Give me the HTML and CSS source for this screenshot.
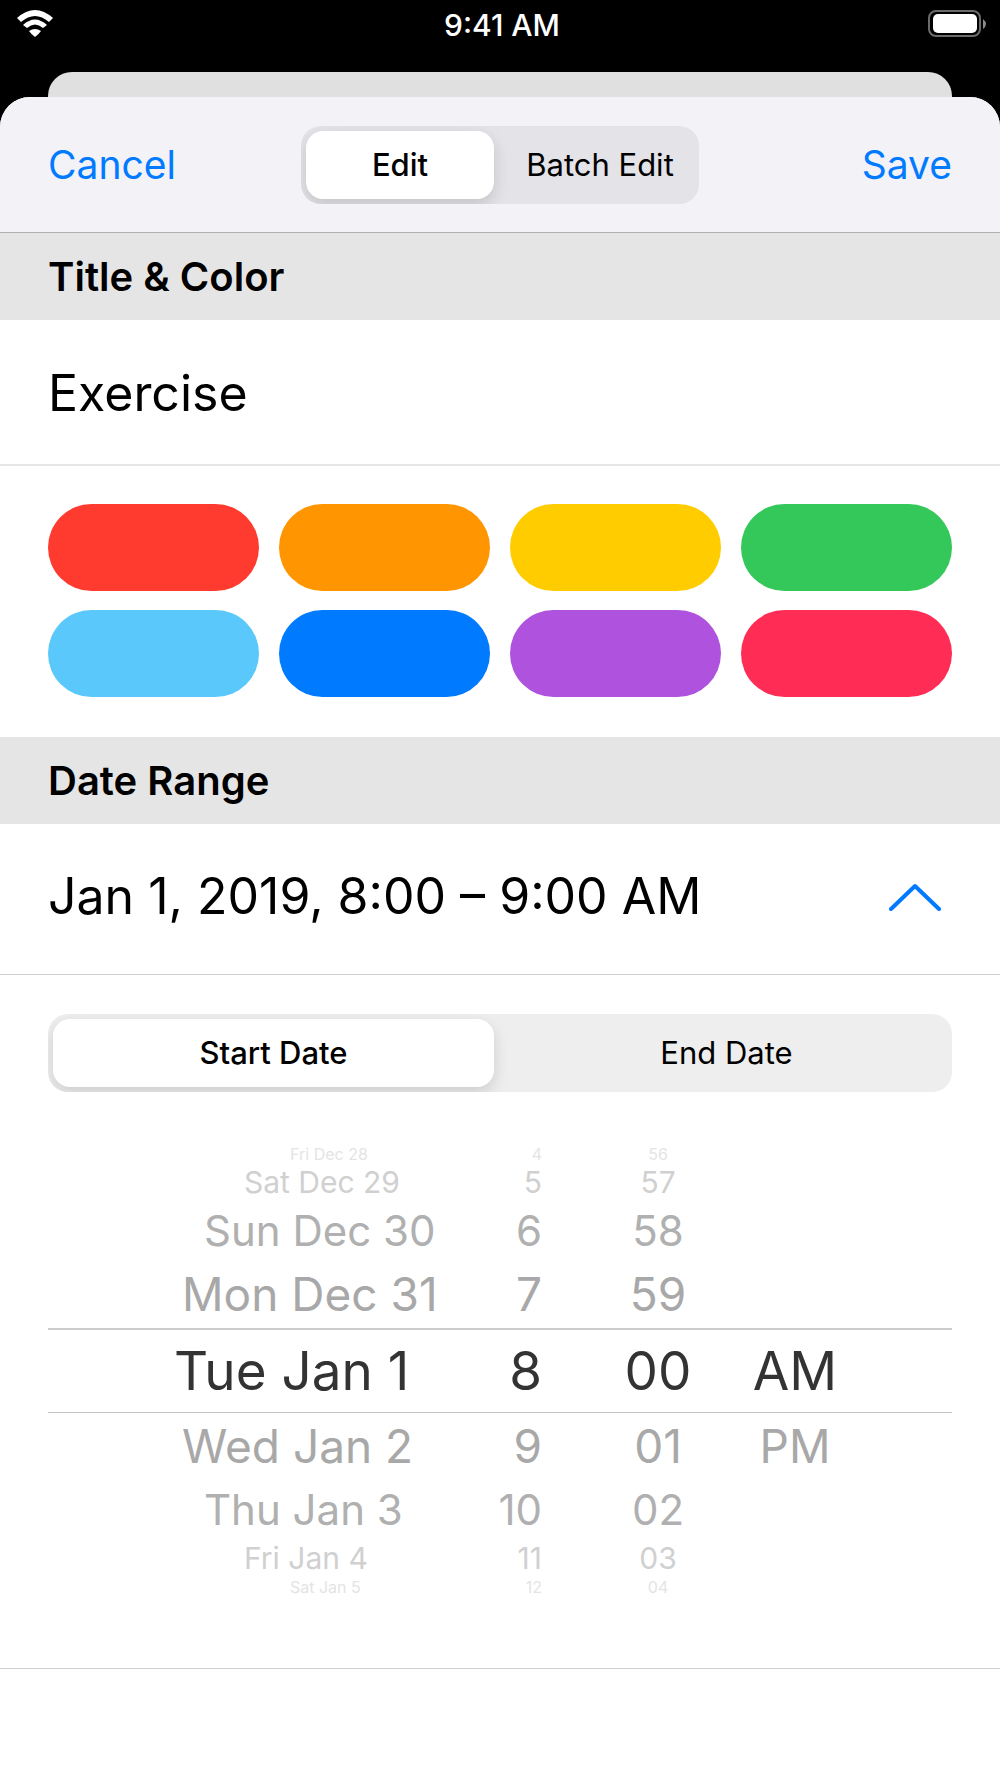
FILE: index.html
```html
<!DOCTYPE html>
<html lang="en">

<head>
    <meta charset="UTF-8">
    <meta name="viewport" content="width=device-width, initial-scale=1">
    <title>Edit</title>
    <link rel="stylesheet" href="styles.css">
</head>

<body>
    <header class="status">
        <svg class="wifi" viewBox="0 0 36 27" width="36" height="27" aria-hidden="true">
            <path d="M0 8Q18 -8 36 8L32 12Q18 0 4 12Z" />
            <path d="M6 15Q18 4 30 15L26 18Q18 11 10 18Z" />
            <path d="M12 21Q18 17 24 21Q22 24 18 27Q14 24 12 21Z" />
        </svg>
        <span class="time">9:41 AM</span>
        <svg class="battery" viewBox="0 0 59 27" width="59" height="27" aria-hidden="true">
            <rect x="1" y="1" width="51" height="25" rx="7" fill="none" stroke="#6b6b6b" stroke-width="2" />
            <rect x="5" y="4" width="44" height="19" rx="5" fill="#fff" />
            <path d="M55 9q6 5 0 10z" fill="#8a8a8a" />
        </svg>
    </header>

    <div class="back-card"></div>

    <form class="sheet">
        <nav class="nav">
            <button type="button" class="link">Cancel</button>
            <div class="segmented">
                <label class="segment"><input type="radio" name="mode" checked><span>Edit</span></label>
                <label class="segment"><input type="radio" name="mode"><span>Batch Edit</span></label>
            </div>
            <button type="button" class="link save">Save</button>
        </nav>

        <h2 class="heading">Title &amp; Color</h2>
        <div class="title-row">
            <input class="title" type="text" value="Exercise" aria-label="Title">
        </div>
        <div class="colors">
            <input type="radio" name="color" class="color red" aria-label="Red">
            <input type="radio" name="color" class="color orange" aria-label="Orange">
            <input type="radio" name="color" class="color yellow" aria-label="Yellow">
            <input type="radio" name="color" class="color green" aria-label="Green">
            <input type="radio" name="color" class="color teal" aria-label="Teal">
            <input type="radio" name="color" class="color blue" aria-label="Blue">
            <input type="radio" name="color" class="color purple" aria-label="Purple">
            <input type="radio" name="color" class="color pink" aria-label="Pink">
        </div>

        <h2 class="heading">Date Range</h2>
        <button type="button" class="range" aria-expanded="true">
            <span>Jan 1, 2019, 8:00 – 9:00 AM</span>
            <svg viewBox="0 0 52 30" width="52" height="30" aria-hidden="true">
                <path d="M2 28L26 5L50 28" fill="none" stroke="#007aff" stroke-width="4" stroke-linecap="round" stroke-linejoin="round" />
            </svg>
        </button>

        <div class="picker">
            <div class="segmented wide">
                <label class="segment"><input type="radio" name="date" checked><span>Start Date</span></label>
                <label class="segment"><input type="radio" name="date"><span>End Date</span></label>
            </div>

            <!-- rows get smaller and lighter away from the selected one -->
            <div class="wheel">
                <div class="row far4"><span>Fri Dec 28</span><span>4</span><span>56</span><span></span></div>
                <div class="row far3"><span>Sat Dec 29</span><span>5</span><span>57</span><span></span></div>
                <div class="row far2"><span>Sun Dec 30</span><span>6</span><span>58</span><span></span></div>
                <div class="row far1"><span>Mon Dec 31</span><span>7</span><span>59</span><span></span></div>
                <div class="row selected"><span>Tue Jan 1</span><span>8</span><span>00</span><span>AM</span></div>
                <div class="row far1"><span>Wed Jan 2</span><span>9</span><span>01</span><span>PM</span></div>
                <div class="row far2"><span>Thu Jan 3</span><span>10</span><span>02</span><span></span></div>
                <div class="row far3"><span>Fri Jan 4</span><span>11</span><span>03</span><span></span></div>
                <div class="row far4"><span>Sat Jan 5</span><span>12</span><span>04</span><span></span></div>
            </div>
        </div>
    </form>
</body>

</html>
```
FILE: styles.css
```css
* {
    box-sizing: border-box;
}

html {
    background: #fff;
}

body {
    margin: 0;
    background: linear-gradient(#000 140px, #fff 140px);
    color: #000;
    font-family: Inter, "Liberation Sans", sans-serif;
}

button,
input {
    margin: 0;
    padding: 0;
    border: 0;
    background: none;
    color: inherit;
    font: inherit;
}

/* status bar */

.status {
    display: grid;
    grid-template-columns: 1fr auto 1fr;
    height: 72px;
    padding: 10px 13px 0 17px;
    align-items: start;
    color: #fff;
}

.wifi {
    fill: #fff;
}

.time {
    font-size: 30px;
    font-weight: 500;
    line-height: 30px;
}

.battery {
    justify-self: end;
}

/* the page behind the sheet */

.back-card {
    height: 25px;
    margin: 0 48px;
    border-radius: 24px 24px 0 0;
    background: #e0e0e0;
}

/* sheet */

.sheet {
    border-radius: 30px 30px 0 0;
    background: #fff;
    overflow: hidden;
}

.nav {
    display: grid;
    grid-template-columns: 1fr 398px 1fr;
    align-items: center;
    height: 136px;
    padding: 0 48px;
    border-bottom: 1px solid #b0b0b3;
    background: #f2f2f7;
}

.link {
    justify-self: start;
    color: #007aff;
    font-size: 39px;
}

.save {
    justify-self: end;
}

.segmented {
    display: grid;
    grid-template-columns: 1fr 1fr;
    gap: 12px;
    height: 78px;
    padding: 5px;
    border-radius: 20px;
    background: #e3e3e8;
    overflow: hidden;
}

.wide {
    background: #eee;
}

.segment {
    display: flex;
}

.segment input {
    position: absolute;
    opacity: 0;
}

.segment span {
    flex: 1;
    border-radius: 17px;
    font-size: 31px;
    line-height: 68px;
    text-align: center;
}

.segment input:checked + span {
    background: #fff;
    box-shadow: 0 6px 16px rgba(0, 0, 0, .14);
    font-weight: 500;
}

.heading {
    margin: 0;
    padding: 0 48px;
    background: #e5e5e5;
    font-size: 40px;
    font-weight: 600;
    line-height: 87px;
}

.title-row {
    padding: 0 48px;
    border-bottom: 2px solid #e5e5e5;
}

.title {
    display: block;
    width: 100%;
    height: 144px;
    padding-top: 2px;
    font-size: 50px;
}

.colors {
    display: grid;
    grid-template-columns: repeat(4, 1fr);
    gap: 19px 20px;
    padding: 38px 48px 40px;
}

.color {
    appearance: none;
    height: 87px;
    border-radius: 44px;
}

.red { background: #ff3b30; }
.orange { background: #ff9500; }
.yellow { background: #ffcc00; }
.green { background: #34c759; }
.teal { background: #5ac8fa; }
.blue { background: #007aff; }
.purple { background: #af52de; }
.pink { background: #ff2d55; }

.range {
    display: flex;
    justify-content: space-between;
    align-items: center;
    width: 100%;
    height: 151px;
    padding: 0 59px 6px 48px;
    border-bottom: 1px solid #d0d0d0;
    font-size: 50px;
}

.picker {
    padding: 39px 48px 71px;
    border-bottom: 1px solid #d0d0d0;
}

/* date wheel */

.wheel {
    margin-top: 52px;
}

.row {
    display: grid;
    grid-template-columns: 318fr 78fr 174fr 138fr;
    padding: 0 98px;
    color: #a8a8a8;
    white-space: nowrap;
}

.row span:nth-child(1) {
    padding-left: 28px;
}

.row span:nth-child(2) {
    text-align: right;
}

.row span:nth-child(3) {
    padding-left: 58px;
    text-align: center;
}

.row span:nth-child(4) {
    padding-left: 20px;
    text-align: center;
}

.selected {
    border-top: 2px solid #ccc;
    border-bottom: 1px solid #c4c4c4;
    color: #333;
    font-size: 53px;
    line-height: 82px;
}

.far1 {
    font-size: 46px;
    line-height: 67px;
}

.far2 {
    color: #b0b0b0;
    font-size: 42px;
    line-height: 60px;
}

.far3 {
    color: #d0d0d0;
    font-size: 30px;
    line-height: 37px;
}

.far4 {
    color: #e4e4e4;
    font-size: 16px;
    line-height: 20px;
}

.far1 span:nth-child(1) {
    padding-left: 36px;
}

.far2 span:nth-child(1) {
    padding-left: 58px;
}

.far3 span:nth-child(1) {
    padding-left: 98px;
}

.far4 span:nth-child(1) {
    padding-left: 144px;
}
```
